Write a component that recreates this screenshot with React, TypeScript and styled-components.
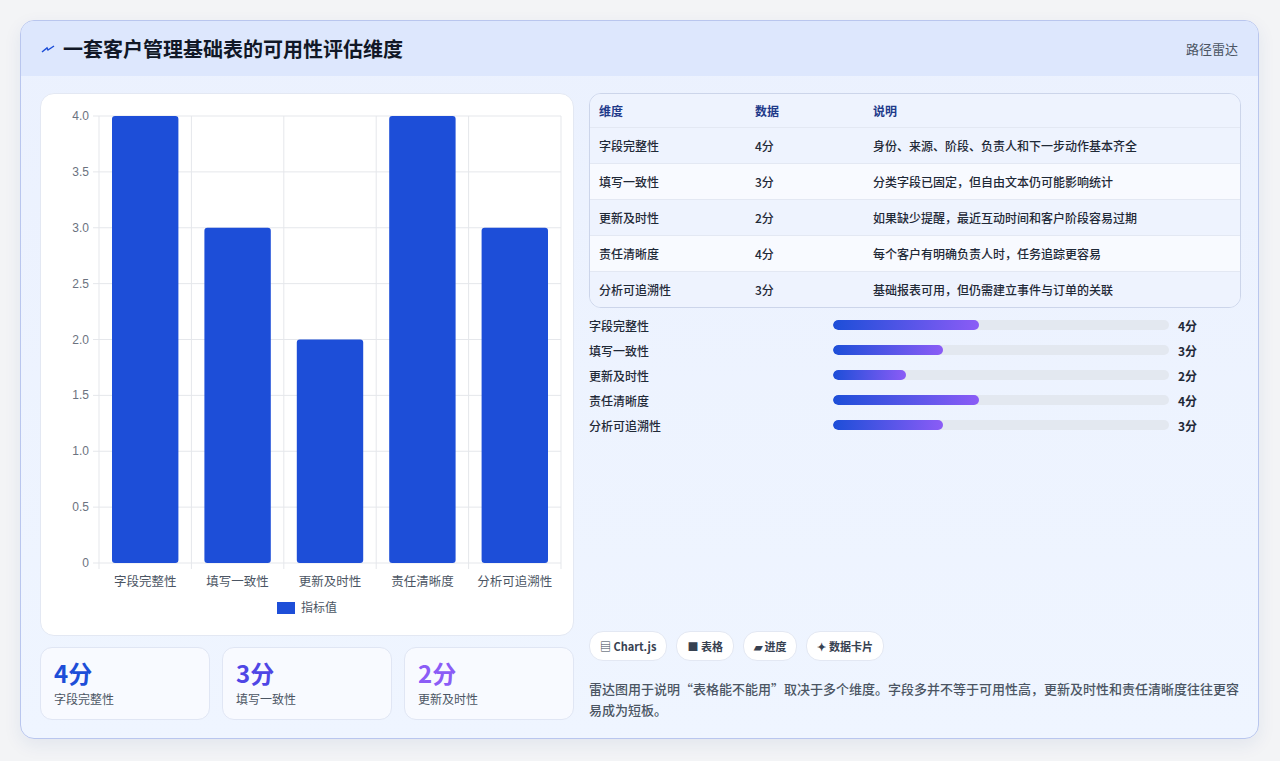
import styled, { createGlobalStyle } from 'styled-components';

const Global = createGlobalStyle`
  body { margin: 0; background: #f3f4f6; font-family: "Noto Sans CJK SC", "Noto Sans", sans-serif; }
`;

const rows = [
  { name: '字段完整性', score: 4, note: '身份、来源、阶段、负责人和下一步动作基本齐全' },
  { name: '填写一致性', score: 3, note: '分类字段已固定，但自由文本仍可能影响统计' },
  { name: '更新及时性', score: 2, note: '如果缺少提醒，最近互动时间和客户阶段容易过期' },
  { name: '责任清晰度', score: 4, note: '每个客户有明确负责人时，任务追踪更容易' },
  { name: '分析可追溯性', score: 3, note: '基础报表可用，但仍需建立事件与订单的关联' },
];

const Page = styled.div`
  padding: 20px 21px 21px 20px;
`;
const Card = styled.div`
  width: 1239px;
  height: 719px;
  box-sizing: border-box;
  border: 1px solid #b9c6ee;
  border-radius: 14px;
  overflow: hidden;
  background: linear-gradient(180deg, #ebf1fe 0%, #eff5ff 100%);
  box-shadow: 0 6px 18px rgba(30, 60, 140, 0.08);
  display: flex;
  flex-direction: column;
`;
const Header = styled.div`
  height: 55px;
  flex: none;
  background: #dde7fd;
  display: flex;
  align-items: center;
  justify-content: space-between;
  padding: 0 20px;
`;
const Title = styled.h1`
  margin: 0;
  font-size: 20px;
  font-weight: 700;
  color: #111827;
  display: flex;
  align-items: center;
  gap: 8px;
`;
const Tag = styled.span`
  font-size: 13px;
  color: #4b5563;
`;
const Body = styled.div`
  flex: 1;
  display: grid;
  grid-template-columns: 534px 652px;
  gap: 15px;
  padding: 17px 18px 18px 19px;
`;
const Col = styled.div`
  display: flex;
  flex-direction: column;
  gap: 11px;
  min-height: 0;
`;
const ChartCard = styled.div`
  height: 543px;
  box-sizing: border-box;
  background: #fff;
  border: 1px solid #e3e8f3;
  border-radius: 14px;
`;
const Stats = styled.div`
  display: grid;
  grid-template-columns: repeat(3, 1fr);
  gap: 12px;
`;
const Stat = styled.div`
  height: 73px;
  box-sizing: border-box;
  background: #f8faff;
  border: 1px solid #e0e6f4;
  border-radius: 12px;
  padding: 10px 13px;
`;
const StatValue = styled.div<{ $c: string }>`
  font-size: 24px;
  font-weight: 700;
  color: ${p => p.$c};
  line-height: 30px;
`;
const StatLabel = styled.div`
  font-size: 12px;
  color: #4b5563;
  margin-top: 2px;
`;
const Table = styled.div`
  border: 1px solid #ccd5ea;
  border-radius: 12px;
  overflow: hidden;
  font-size: 12px;
  color: #1f2937;
`;
const Row = styled.div<{ $bg: string; $head?: boolean }>`
  display: grid;
  grid-template-columns: 156px 118px 1fr;
  height: ${p => (p.$head ? 33 : 35)}px;
  align-items: center;
  padding-left: 9px;
  background: ${p => p.$bg};
  border-top: ${p => (p.$head ? 'none' : '1px solid #e3e8f3')};
  font-weight: ${p => (p.$head ? 700 : 500)};
  color: ${p => (p.$head ? '#1e3a8a' : '#1f2937')};
`;
const Bars = styled.div`
  display: flex;
  flex-direction: column;
  gap: 7px;
  margin-top: -3px;
`;
const BarRow = styled.div`
  display: grid;
  grid-template-columns: 244px 336px 40px;
  gap: 0;
  align-items: center;
  height: 18px;
  font-size: 12px;
  color: #1f2937;
  font-weight: 500;
`;
const Track = styled.div`
  height: 10px;
  border-radius: 5px;
  background: #e3e8f0;
  overflow: hidden;
`;
const Fill = styled.div`
  height: 100%;
  border-radius: 5px;
  background: linear-gradient(90deg, #1d4ed8, #8b5cf6);
`;
const Score = styled.span`
  padding-left: 9px;
  font-weight: 700;
`;
const Spacer = styled.div`
  flex: 1;
`;
const Chips = styled.div`
  display: flex;
  gap: 9px;
`;
const Chip = styled.span`
  height: 28px;
  padding: 0 10px;
  display: flex;
  align-items: center;
  gap: 4px;
  background: #fff;
  border: 1px solid #e3e8f3;
  border-radius: 14px;
  font-size: 11px;
  font-weight: 700;
  color: #374151;
`;
const Desc = styled.p`
  margin: 6px 0 0;
  font-size: 13px;
  line-height: 21px;
  color: #4b5563;
  font-weight: 500;
`;

function BarChart() {
  const x0 = 58, x1 = 520, yTop = 22, yBot = 469;
  const w = (x1 - x0) / 5;
  const ticks = [0, 0.5, 1, 1.5, 2, 2.5, 3, 3.5, 4];
  const y = (v: number) => yBot - (v / 4) * (yBot - yTop);
  return (
    <svg width="532" height="541" style={{ display: 'block' }}>
      {ticks.map(t => (
        <g key={t}>
          <line x1={x0 - 6} x2={x1} y1={y(t)} y2={y(t)} stroke="#e5e7eb" />
          <text x={x0 - 10} y={y(t) + 4} fontSize="12" fill="#6b7280" textAnchor="end" fontFamily="Liberation Sans, sans-serif">
            {t === 0 ? '0' : t.toFixed(1)}
          </text>
        </g>
      ))}
      {[0, 1, 2, 3, 4, 5].map(i => (
        <line key={i} x1={x0 + i * w} x2={x0 + i * w} y1={yTop} y2={yBot + 6} stroke="#e5e7eb" />
      ))}
      {rows.map((r, i) => (
        <g key={r.name}>
          <rect x={x0 + i * w + 13} y={y(r.score)} width={w - 26} height={yBot - y(r.score)} rx="3" fill="#1d4ed8" />
          <text x={x0 + i * w + w / 2} y={yBot + 23} fontSize="12.5" fill="#4b5563" textAnchor="middle">{r.name}</text>
        </g>
      ))}
      <rect x="236" y="508" width="18" height="12" fill="#1d4ed8" />
      <text x="260" y="518" fontSize="12" fill="#4b5563">指标值</text>
    </svg>
  );
}

export default function App() {
  const colors = ['#1d4ed8', '#4f46e5', '#8b5cf6'];
  return (
    <Page>
      <Global />
      <Card>
        <Header>
          <Title>
            <svg width="14" height="10" viewBox="0 0 14 10">
              <path d="M1 8 L6 4 L7 6 L13 2" stroke="#1d4ed8" strokeWidth="1.5" fill="none" />
            </svg>
            一套客户管理基础表的可用性评估维度
          </Title>
          <Tag>路径雷达</Tag>
        </Header>
        <Body>
          <Col>
            <ChartCard>
              <BarChart />
            </ChartCard>
            <Stats>
              {rows.slice(0, 3).map((r, i) => (
                <Stat key={r.name}>
                  <StatValue $c={colors[i]}>{r.score}分</StatValue>
                  <StatLabel>{r.name}</StatLabel>
                </Stat>
              ))}
            </Stats>
          </Col>
          <Col>
            <Table>
              <Row $head $bg="#eef3fe">
                <span>维度</span><span>数据</span><span>说明</span>
              </Row>
              {rows.map((r, i) => (
                <Row key={r.name} $bg={i % 2 === 0 ? '#eef3fe' : '#f8faff'}>
                  <span>{r.name}</span><span>{r.score}分</span><span>{r.note}</span>
                </Row>
              ))}
            </Table>
            <Bars>
              {rows.map(r => (
                <BarRow key={r.name}>
                  <span>{r.name}</span>
                  <Track><Fill style={{ width: `${r.score * 10.9}%` }} /></Track>
                  <Score>{r.score}分</Score>
                </BarRow>
              ))}
            </Bars>
            <Spacer />
            <Chips>
              <Chip>▤ Chart.js</Chip>
              <Chip>■ 表格</Chip>
              <Chip>▰ 进度</Chip>
              <Chip>✦ 数据卡片</Chip>
            </Chips>
            <Desc>雷达图用于说明“表格能不能用”取决于多个维度。字段多并不等于可用性高，更新及时性和责任清晰度往往更容易成为短板。</Desc>
          </Col>
        </Body>
      </Card>
    </Page>
  );
}
